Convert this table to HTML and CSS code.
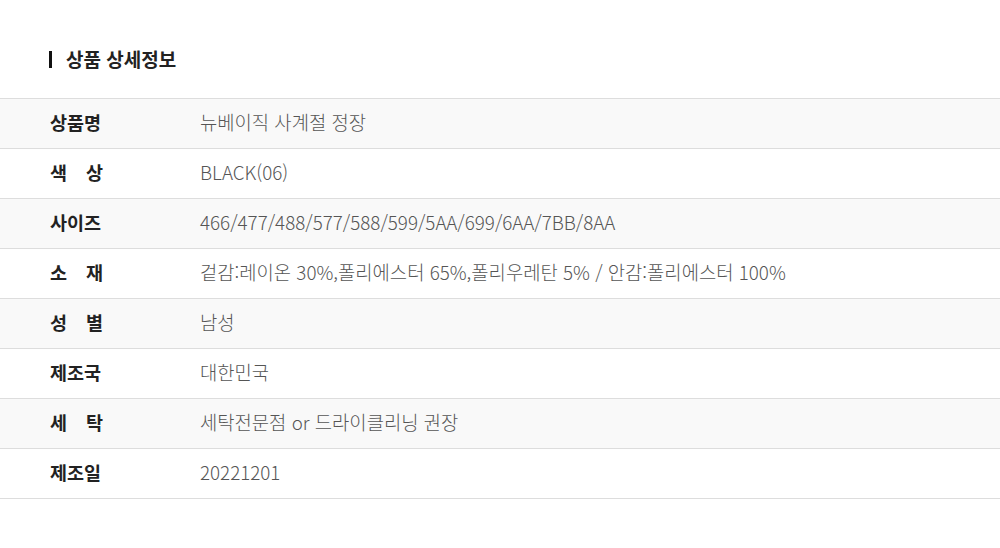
FILE: index.html
```html
<!DOCTYPE html>
<html lang="ko">
<head>
    <meta charset="UTF-8">
    <meta name="viewport" content="width=device-width, initial-scale=1.0">
    <title>상품 상세정보</title>
    <link rel="stylesheet" href="styles.css">
</head>
<body>
    <div class="detail">
        <h2 class="detail-title">상품 상세정보</h2>
        <table class="info-table">
            <tr>
                <th><span class="label">상품명</span></th>
                <td>뉴베이직 사계절 정장</td>
            </tr>
            <tr>
                <th><span class="label">색 상</span></th>
                <td>BLACK(06)</td>
            </tr>
            <tr>
                <th><span class="label">사이즈</span></th>
                <td>466/477/488/577/588/599/5AA/699/6AA/7BB/8AA</td>
            </tr>
            <tr>
                <th><span class="label">소 재</span></th>
                <td>겉감:레이온 30%,폴리에스터 65%,폴리우레탄 5% / 안감:폴리에스터 100%</td>
            </tr>
            <tr>
                <th><span class="label">성 별</span></th>
                <td>남성</td>
            </tr>
            <tr>
                <th><span class="label">제조국</span></th>
                <td>대한민국</td>
            </tr>
            <tr>
                <th><span class="label">세 탁</span></th>
                <td>세탁전문점 or 드라이클리닝 권장</td>
            </tr>
            <tr>
                <th><span class="label">제조일</span></th>
                <td>20221201</td>
            </tr>
        </table>
    </div>
</body>
</html>
```

FILE: styles.css
```css
body {
    font-family: "Noto Sans CJK KR", "Noto Sans", sans-serif;
    background-color: #fff;
    color: #222;
    margin: 0;
}
.detail {
    padding-top: 51px;
}
.detail-title {
    margin: 0 0 30px 49px;
    padding-left: 14px;
    border-left: 3px solid #111;
    font-size: 19px;
    font-weight: bold;
    line-height: 16px;
    height: 17px;
    color: #222;
}
.info-table {
    width: 100%;
    border-collapse: collapse;
    border-top: 1px solid #ddd;
}
.info-table tr {
    height: 50px;
}
.info-table tr:nth-child(odd) {
    background-color: #f9f9f9;
}
.info-table th,
.info-table td {
    border-bottom: 1px solid #ddd;
    padding: 0 0 4px;
    vertical-align: middle;
    text-align: left;
    font-size: 18.8px;
}
.info-table th {
    width: 150px;
    padding-left: 50px;
    font-weight: bold;
    color: #222;
}
.label {
    display: inline-block;
    width: 53px;
    font-size: 18.5px;
    text-align: justify;
    text-align-last: justify;
}
.info-table td {
    color: #555;
    font-weight: 300;
}
```
